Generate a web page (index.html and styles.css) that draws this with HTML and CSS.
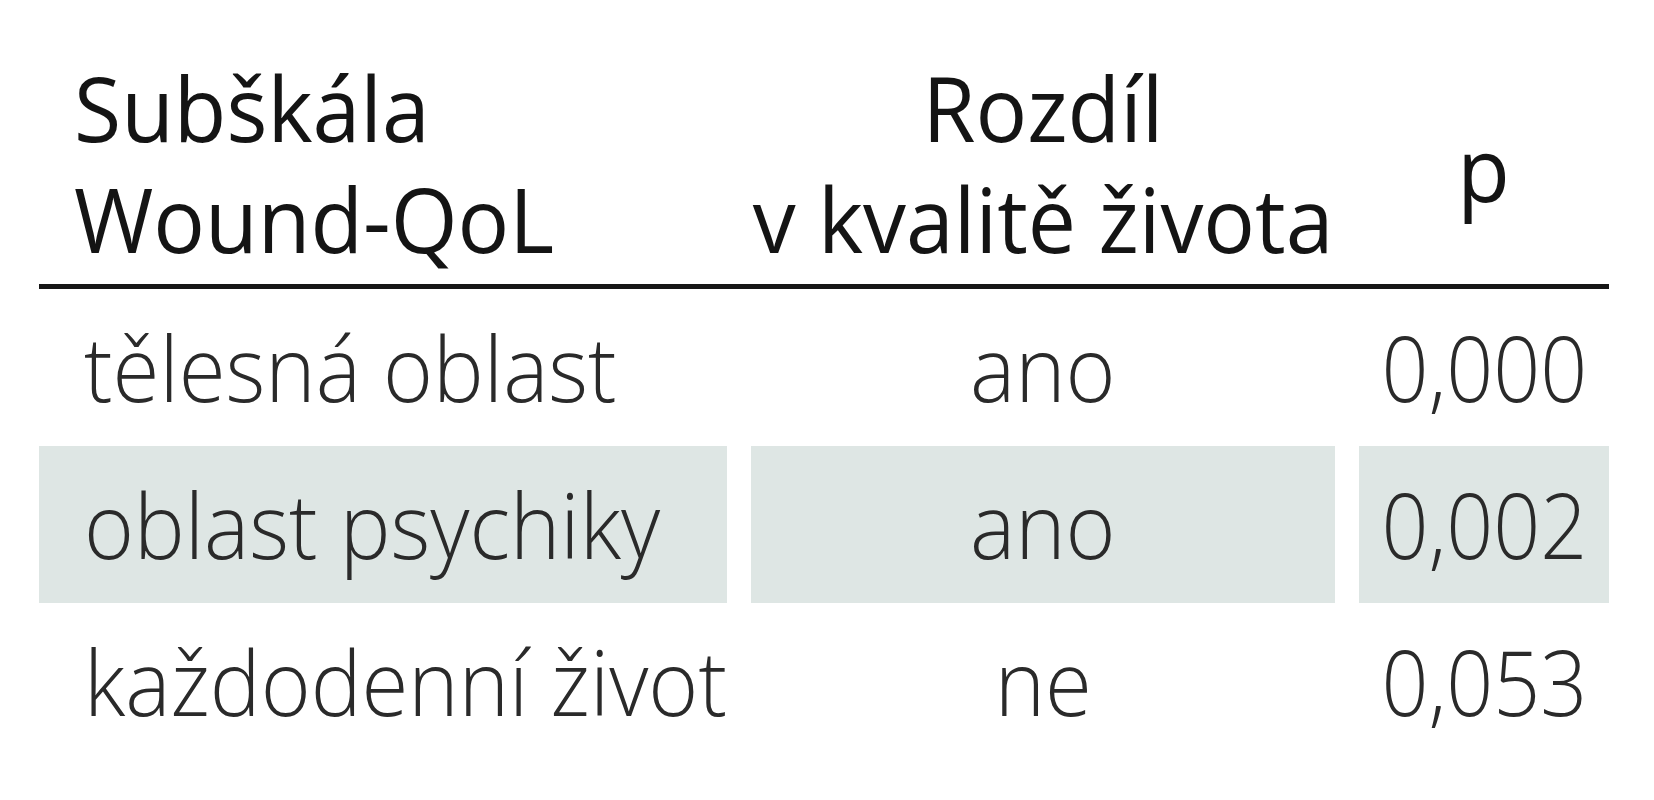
FILE: index.html
```html
<!DOCTYPE html>
<html lang="cs">
<head>
<meta charset="utf-8">
<title>Wound-QoL</title>
<link rel="stylesheet" href="styles.css">
</head>
<body>
<div class="table">
  <div class="thead">
    <div class="th c1"><span class="sq">Subškála<br>Wound-QoL</span></div>
    <div class="th c2"><span class="sq">Rozdíl<br>v kvalitě života</span></div>
    <div class="th c3"><span class="sq">p</span></div>
  </div>
  <div class="row">
    <div class="td c1"><span class="lt">tělesná oblast</span></div>
    <div class="td c2"><span class="lt">ano</span></div>
    <div class="td c3"><span class="lt num">0,000</span></div>
  </div>
  <div class="row shaded">
    <div class="td c1"><span class="lt">oblast psychiky</span></div>
    <div class="td c2"><span class="lt">ano</span></div>
    <div class="td c3"><span class="lt num">0,002</span></div>
  </div>
  <div class="row">
    <div class="td c1"><span class="lt">každodenní život</span></div>
    <div class="td c2"><span class="lt">ne</span></div>
    <div class="td c3"><span class="lt num">0,053</span></div>
  </div>
</div>
</body>
</html>
```
FILE: styles.css
```css
html, body {
  margin: 0;
  padding: 0;
  background: #ffffff;
}

body {
  font-family: "Open Sans", "Liberation Sans", sans-serif;
  font-size: 90px;
}

.table {
  margin-left: 39px;
  width: 1570px;
}

.thead,
.row {
  display: grid;
  grid-template-columns: 688px 584px 250px;
  column-gap: 24px;
}

.thead {
  border-bottom: 5px solid #161616;
  height: 284px;
  align-items: start;
}

.th {
  color: #141414;
  font-weight: 500;
  line-height: 111px;
  padding-top: 52px;
  white-space: nowrap;
}

.th.c1 {
  padding-left: 35px;
}

.th.c2,
.th.c3 {
  display: flex;
  justify-content: center;
  text-align: center;
}

.th.c3 {
  padding-top: 112px;
}

.sq {
  display: inline-block;
  transform: scaleX(0.955);
  transform-origin: left center;
}

.th.c2 .sq,
.th.c3 .sq {
  transform-origin: center center;
}

.td {
  height: 157px;
  line-height: 157px;
  color: #2a2a2a;
  font-weight: 300;
  white-space: nowrap;
}

.td.c1 {
  padding-left: 45px;
}

.td.c2,
.td.c3 {
  display: flex;
  justify-content: center;
}

.lt {
  display: inline-block;
  transform: scaleX(0.948);
  transform-origin: left center;
}

.lt.num {
  transform: scaleX(0.915);
}

.td.c2 .lt,
.td.c3 .lt {
  transform-origin: center center;
}

.shaded .td {
  background: #dee6e4;
}
```
